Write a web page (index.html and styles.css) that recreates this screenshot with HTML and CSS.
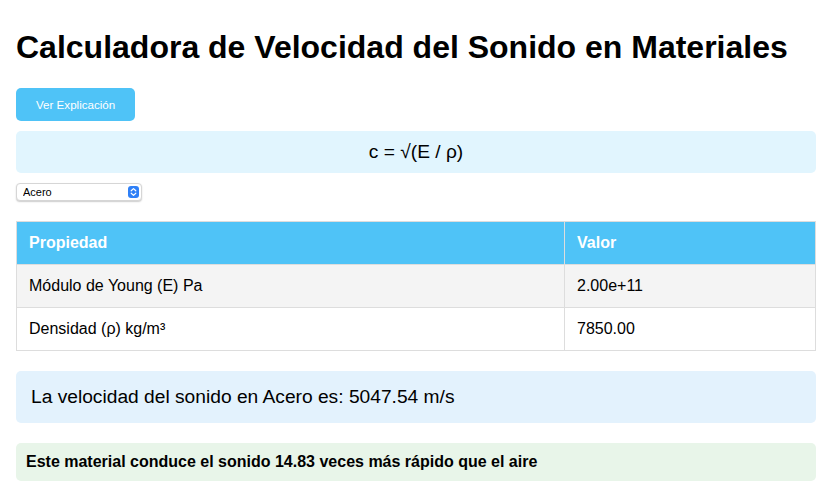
FILE: index.html
```html
<!DOCTYPE html>
<html lang="es">
<head>
<meta charset="utf-8">
<title>Calculadora de Velocidad del Sonido</title>
<link rel="stylesheet" href="styles.css">
</head>
<body>
<div class="container">
  <h1 class="title">Calculadora de Velocidad del Sonido en Materiales</h1>
  <button class="btn">Ver Explicación</button>
  <div class="formula">c = √(E / ρ)</div>
  <div class="select-wrap">
    <div class="select-box">
      <select class="material">
        <option>Acero</option>
        <option>Aluminio</option>
        <option>Cobre</option>
        <option>Vidrio</option>
      </select>
      <svg class="select-arrow" width="11" height="12" viewBox="0 0 11 12" aria-hidden="true">
        <rect x="0" y="0" width="11" height="12" rx="3" fill="#2f80f7"/>
        <path d="M3.2 4.8 L5.5 2.6 L7.8 4.8" fill="none" stroke="#fff" stroke-width="1.2" stroke-linecap="round" stroke-linejoin="round"/>
        <path d="M3.2 7.2 L5.5 9.4 L7.8 7.2" fill="none" stroke="#fff" stroke-width="1.2" stroke-linecap="round" stroke-linejoin="round"/>
      </svg>
    </div>
  </div>
  <table class="props">
    <thead>
      <tr><th class="col-prop">Propiedad</th><th>Valor</th></tr>
    </thead>
    <tbody>
      <tr class="alt"><td>Módulo de Young (E) Pa</td><td>2.00e+11</td></tr>
      <tr><td>Densidad (ρ) kg/m³</td><td>7850.00</td></tr>
    </tbody>
  </table>
  <div class="result">La velocidad del sonido en Acero es: 5047.54 m/s</div>
  <div class="compare">Este material conduce el sonido 14.83 veces más rápido que el aire</div>
</div>
</body>
</html>
```
FILE: styles.css
```css
body {
  margin: 8px;
  font-family: "Liberation Sans", Arial, sans-serif;
  color: #000;
  background: #fff;
}
.container {
  max-width: 800px;
  margin: 0 auto;
}
.title {
  font-size: 32px;
  font-weight: bold;
  margin: 21px 0 22px;
}
.btn {
  display: block;
  background: #4fc3f7;
  color: #fff;
  border: none;
  border-radius: 5px;
  padding: 10px 20px;
  font-family: "Liberation Sans", Arial, sans-serif;
  font-size: 11.6px;
  line-height: 13px;
  margin: 0 0 10px;
}
.formula {
  background: #e1f5fe;
  border-radius: 5px;
  padding: 10px;
  text-align: center;
  font-size: 19.2px;
  line-height: 22px;
  margin-bottom: 10px;
}
.select-wrap {
  margin-bottom: 20px;
}
.select-box {
  position: relative;
  width: 126px;
  height: 18px;
}
.material {
  -webkit-appearance: none;
  appearance: none;
  width: 126px;
  height: 18px;
  font-family: "Liberation Sans", Arial, sans-serif;
  font-size: 11px;
  color: #000;
  border: 1px solid #d6d6d6;
  border-radius: 4px;
  background: #fff;
  padding: 0 6px;
  box-shadow: 0 1px 1.5px rgba(0,0,0,0.2);
  display: block;
}
.select-arrow {
  position: absolute;
  right: 3px;
  top: 3px;
  pointer-events: none;
}
.props {
  width: 100%;
  border-collapse: collapse;
  margin-bottom: 20px;
}
.props th, .props td {
  border: 1px solid #ddd;
  padding: 12px;
  text-align: left;
  font-size: 16px;
  line-height: 18px;
}
.props th {
  background: #4fc3f7;
  color: #fff;
  font-weight: bold;
}
.col-prop {
  width: 523px;
}
.props tr.alt td {
  background: #f4f4f4;
}
.result {
  background: #e3f2fd;
  border-radius: 5px;
  padding: 15px;
  font-size: 19.2px;
  line-height: 22px;
  margin-bottom: 20px;
}
.compare {
  background: #e8f5e9;
  border-radius: 5px;
  padding: 10px;
  font-size: 16px;
  font-weight: bold;
  line-height: 18px;
}
```
